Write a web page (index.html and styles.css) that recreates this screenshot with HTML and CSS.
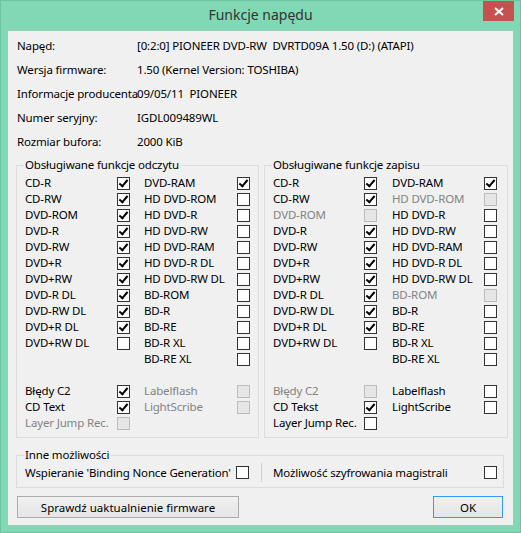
FILE: index.html
```html
<!DOCTYPE html>
<html lang="pl">
<head>
<meta charset="utf-8">
<title>Funkcje napędu</title>
<link rel="stylesheet" href="styles.css">
</head>
<body>
<div class="window">
  <div class="titlebar">
    <span class="title">Funkcje napędu</span>
    <div class="close">
      <svg width="31" height="20" viewBox="0 0 31 20"><path d="M12 7 L20 14 M20 7 L12 14" stroke="#fff" stroke-width="2" fill="none"/></svg>
    </div>
  </div>
  <div class="client">
    <div class="info">
      <span>Napęd:</span><span>[0:2:0] PIONEER DVD-RW  DVRTD09A 1.50 (D:) (ATAPI)</span>
      <span>Wersja firmware:</span><span>1.50 (Kernel Version: TOSHIBA)</span>
      <span>Informacje producenta</span><span>09/05/11  PIONEER</span>
      <span>Numer seryjny:</span><span>IGDL009489WL</span>
      <span>Rozmiar bufora:</span><span>2000 KiB</span>
    </div>
    <div class="groups">
      <fieldset class="grp read">
        <legend>Obsługiwane funkcje odczytu</legend>
        <div class="grid">
          <span>CD-R</span><span class="cb on"></span><span>DVD-RAM</span><span class="cb on"></span>
          <span>CD-RW</span><span class="cb on"></span><span>HD DVD-ROM</span><span class="cb"></span>
          <span>DVD-ROM</span><span class="cb on"></span><span>HD DVD-R</span><span class="cb"></span>
          <span>DVD-R</span><span class="cb on"></span><span>HD DVD-RW</span><span class="cb"></span>
          <span>DVD-RW</span><span class="cb on"></span><span>HD DVD-RAM</span><span class="cb"></span>
          <span>DVD+R</span><span class="cb on"></span><span>HD DVD-R DL</span><span class="cb"></span>
          <span>DVD+RW</span><span class="cb on"></span><span>HD DVD-RW DL</span><span class="cb"></span>
          <span>DVD-R DL</span><span class="cb on"></span><span>BD-ROM</span><span class="cb"></span>
          <span>DVD-RW DL</span><span class="cb on"></span><span>BD-R</span><span class="cb"></span>
          <span>DVD+R DL</span><span class="cb on"></span><span>BD-RE</span><span class="cb"></span>
          <span>DVD+RW DL</span><span class="cb"></span><span>BD-R XL</span><span class="cb"></span>
          <span></span><span></span><span>BD-RE XL</span><span class="cb"></span>
          <span class="blank"></span>
          <span>Błędy C2</span><span class="cb on"></span><span class="off">Labelflash</span><span class="cb dis"></span>
          <span>CD Text</span><span class="cb on"></span><span class="off">LightScribe</span><span class="cb dis"></span>
          <span class="off">Layer Jump Rec.</span><span class="cb dis"></span><span></span><span></span>
        </div>
      </fieldset>
      <fieldset class="grp write">
        <legend>Obsługiwane funkcje zapisu</legend>
        <div class="grid">
          <span>CD-R</span><span class="cb on"></span><span>DVD-RAM</span><span class="cb on"></span>
          <span>CD-RW</span><span class="cb on"></span><span class="off">HD DVD-ROM</span><span class="cb dis"></span>
          <span class="off">DVD-ROM</span><span class="cb dis"></span><span>HD DVD-R</span><span class="cb"></span>
          <span>DVD-R</span><span class="cb on"></span><span>HD DVD-RW</span><span class="cb"></span>
          <span>DVD-RW</span><span class="cb on"></span><span>HD DVD-RAM</span><span class="cb"></span>
          <span>DVD+R</span><span class="cb on"></span><span>HD DVD-R DL</span><span class="cb"></span>
          <span>DVD+RW</span><span class="cb on"></span><span>HD DVD-RW DL</span><span class="cb"></span>
          <span>DVD-R DL</span><span class="cb on"></span><span class="off">BD-ROM</span><span class="cb dis"></span>
          <span>DVD-RW DL</span><span class="cb on"></span><span>BD-R</span><span class="cb"></span>
          <span>DVD+R DL</span><span class="cb on"></span><span>BD-RE</span><span class="cb"></span>
          <span>DVD+RW DL</span><span class="cb"></span><span>BD-R XL</span><span class="cb"></span>
          <span></span><span></span><span>BD-RE XL</span><span class="cb"></span>
          <span class="blank"></span>
          <span class="off">Błędy C2</span><span class="cb dis"></span><span>Labelflash</span><span class="cb"></span>
          <span>CD Tekst</span><span class="cb on"></span><span>LightScribe</span><span class="cb"></span>
          <span>Layer Jump Rec.</span><span class="cb"></span><span></span><span></span>
        </div>
      </fieldset>
    </div>
    <fieldset class="grp other">
      <legend>Inne możliwości</legend>
      <div class="otherrow">
        <span>Wspieranie 'Binding Nonce Generation'</span><span class="cb"></span>
        <span class="sep"></span>
        <span>Możliwość szyfrowania magistrali</span><span class="cb"></span>
      </div>
    </fieldset>
    <div class="buttons">
      <button class="btn btn-fw">Sprawdź uaktualnienie firmware</button>
      <button class="btn btn-ok">OK</button>
    </div>
  </div>
</div>
</body>
</html>
```

FILE: styles.css
```css
* { box-sizing: border-box; }
html, body { margin: 0; padding: 0; }
body {
  font-family: "Noto Sans", "Open Sans", sans-serif;
  font-size: 11.5px;
  letter-spacing: -0.15px;
  color: #000;
  background: #80d8b4;
}
.window {
  width: 521px;
  height: 533px;
  background: #80d8b4;
  border: 1px solid #6cc4a0;
  padding: 0 6px 6px 6px;
  display: flex;
  flex-direction: column;
}
.titlebar {
  height: 29px;
  flex: none;
  display: grid;
  grid-template-columns: 1fr auto 1fr;
}
.title {
  grid-column: 2;
  font-size: 14px;
  letter-spacing: 0;
  line-height: 28px;
  color: #333;
}
.close {
  grid-column: 3;
  justify-self: end;
  align-self: start;
  width: 31px;
  height: 20px;
  background: #c75050;
  display: flex;
}
.client {
  flex: 1;
  background: #f0f0f0;
  border: 1px solid #9fcab6;
  padding: 3px 5px 0 8px;
}
.info {
  display: grid;
  grid-template-columns: 120px auto;
  grid-auto-rows: 24px;
  align-items: center;
  padding-left: 1px;
  line-height: 16px;
  white-space: pre;
}
.groups {
  display: flex;
  gap: 5px;
  margin-top: 3px;
}
.grp {
  margin: 0;
  min-width: 0;
  border: 1px solid #dcdcdc;
  padding: 2px 6px 6px 8px;
}
.grp legend {
  padding: 0 2px 0 1px;
  margin-left: -1px;
  line-height: 16px;
}
.read { width: 243px; }
.write { width: 244px; }
.grid {
  display: grid;
  grid-template-columns: 92px 27px 93px 13px;
  grid-auto-rows: 16px;
  align-items: center;
  line-height: 16px;
  white-space: nowrap;
}
.write .grid { grid-template-columns: 91px 28px 92px 13px; }
.blank { grid-column: 1 / -1; }
.off { color: #838383; }
.cb {
  display: block;
  width: 13px;
  height: 13px;
  border: 1px solid #333;
  background: #fff;
  position: relative;
}
.cb.on::after {
  content: "";
  position: absolute;
  left: 3px;
  top: 0;
  width: 3px;
  height: 7px;
  border: solid #000;
  border-width: 0 2px 2px 0;
  transform: rotate(40deg);
}
.cb.dis {
  border-color: #bcbcbc;
  background: #e6e6e6;
}
.other {
  margin-top: 9px;
  margin-right: 4px;
  padding: 0 6px 6px 8px;
}
.otherrow {
  display: grid;
  grid-template-columns: 211px 13px 24px 211px 13px;
  height: 18px;
  align-items: center;
  white-space: nowrap;
}
.sep {
  justify-self: center;
  width: 1px;
  height: 19px;
  background: #d0d0d0;
}
.buttons {
  display: flex;
  justify-content: space-between;
  margin: 8px 5px 0 1px;
}
.btn {
  height: 22px;
  padding: 0;
  border: 1px solid #acacac;
  background: linear-gradient(#f0f0f0, #e5e5e5);
  font: inherit;
  color: #000;
}
.btn-fw { width: 222px; }
.btn-ok { width: 70px; border-color: #3399ff; }
```
